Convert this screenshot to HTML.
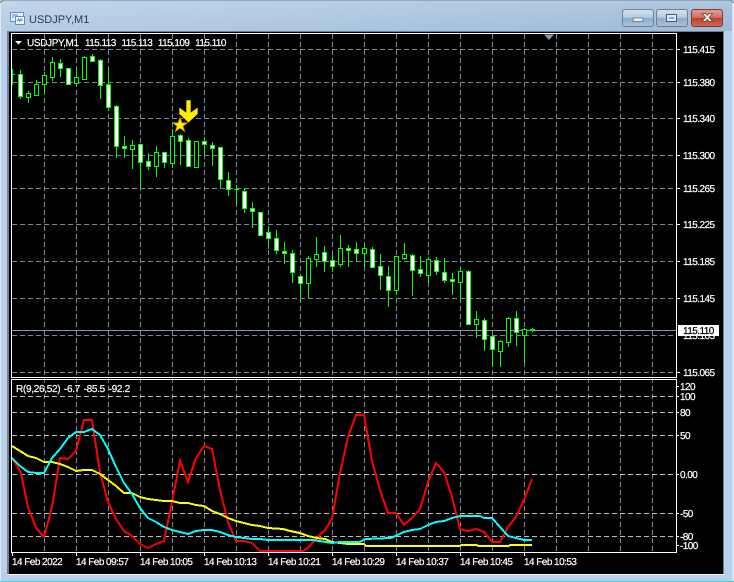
<!DOCTYPE html>
<html><head><meta charset="utf-8"><style>
html,body{margin:0;padding:0;width:734px;height:582px;overflow:hidden;background:#b8d1ea}
svg{position:absolute;left:0;top:0;display:block}
text{font-family:"Liberation Sans",sans-serif;font-size:10px;letter-spacing:-.55px;fill:#fff;stroke:#fff;stroke-width:.2px;text-rendering:geometricPrecision}
.w{word-spacing:3.4px}
.b{fill:none;stroke:#fff;stroke-width:1}
.g{fill:none;stroke:#778899;stroke-width:1;stroke-dasharray:5 3}
.s{fill:none;stroke:#b8bfc6;stroke-width:1;stroke-dasharray:5 3}
.l{fill:none;stroke-width:2;stroke-linejoin:miter}
</style></head><body>
<svg width="734" height="582" viewBox="0 0 734 582" xmlns="http://www.w3.org/2000/svg">
<defs>
<linearGradient id="tb" x1="0" y1="0" x2="1" y2="0"><stop offset="0" stop-color="#b5cde5"/><stop offset=".5" stop-color="#a9c4df"/><stop offset="1" stop-color="#9dbad7"/></linearGradient>
<linearGradient id="tv" x1="0" y1="0" x2="0" y2="1"><stop offset="0" stop-color="#fff" stop-opacity=".18"/><stop offset="1" stop-color="#fff" stop-opacity="0"/></linearGradient>
<linearGradient id="bb" x1="0" y1="0" x2="0" y2="1"><stop offset="0" stop-color="#d5e2ef"/><stop offset=".48" stop-color="#b5cbe0"/><stop offset=".5" stop-color="#8dacca"/><stop offset="1" stop-color="#a7c3de"/></linearGradient>
<linearGradient id="cb" x1="0" y1="0" x2="0" y2="1"><stop offset="0" stop-color="#e0a094"/><stop offset=".48" stop-color="#cf6f60"/><stop offset=".5" stop-color="#bb3f2e"/><stop offset="1" stop-color="#cf6a55"/></linearGradient>
<clipPath id="cm"><rect x="12" y="34" width="664" height="343"/></clipPath>
</defs>
<!-- window frame -->
<rect x="0" y="0" width="734" height="582" fill="#b8d1ea"/>
<rect x="0" y="0" width="734" height="31" fill="url(#tb)"/>
<rect x="0" y="0" width="734" height="31" fill="url(#tv)"/>
<path d="M0 3L3 0H730L734 3" fill="none" stroke="#6f8196" stroke-width="1"/>
<rect x="0" y="581" width="734" height="1" fill="#2fd3e8"/>
<rect x="732" y="3" width="2" height="578" fill="#d8e6f3"/>
<rect x="0" y="3" width="1" height="578" fill="#dfeaf5"/>
<!-- title icon -->
<rect x="10.500" y="12.500" width="13" height="9" fill="#eaf2fb" stroke="#5f8fc6"/>
<rect x="15.500" y="16.500" width="9" height="8" fill="#f4f8fd" stroke="#5f8fc6"/>
<path d="M12 15h6M12 17h2M17 21l1.500-2 1 2 1.500-2 1 2" fill="none" stroke="#4e80bb"/>
<text x="29" y="23" style="font-size:11px;letter-spacing:0;fill:#2c3a50;stroke:none">USDJPY,M1</text>
<!-- buttons -->
<rect x="622.500" y="9.500" width="31" height="17" rx="2.500" fill="url(#bb)" stroke="#6c8098"/>
<rect x="656.500" y="9.500" width="31" height="17" rx="2.500" fill="url(#bb)" stroke="#6c8098"/>
<rect x="691.500" y="9.500" width="31" height="17" rx="2.500" fill="url(#cb)" stroke="#7d3a33"/>
<rect x="633" y="18" width="10" height="3.500" fill="#eef2f6" stroke="#56677c" stroke-width=".7"/>
<rect x="666.500" y="14.500" width="10" height="7" fill="#dfe7ef" stroke="#4d5d72"/>
<rect x="669" y="17" width="5" height="2" fill="#8ea7c1"/>
<path d="M702 13.500h3.500l1.800 2 1.800-2h3.500l-3.500 4 3.500 4h-3.500l-1.800-2-1.800 2H702l3.500-4z" fill="#f4f1ef" stroke="#6f3a33" stroke-width=".7"/>
<!-- client -->
<rect x="7" y="31" width="717" height="544" fill="#6f7f8f"/>
<rect x="9" y="32" width="714" height="542" fill="#000"/>
<rect x="7" y="574" width="717" height="1" fill="#f4f7fa"/>
<!-- grid vertical -->
<path class="g" d="M44.500 34V552M76.500 34V552M108.500 34V552M140.500 34V552M172.500 34V552M204.500 34V552M236.500 34V552M268.500 34V552M300.500 34V552M332.500 34V552M364.500 34V552M396.500 34V552M428.500 34V552M460.500 34V552M492.500 34V552M524.500 34V552M556.500 34V552M588.500 34V552M620.500 34V552M652.500 34V552"/>
<!-- grid horizontal -->
<path class="g" d="M12 49.500H676M12 82.500H676M12 118.500H676M12 155.500H676M12 188.500H676M12 224.500H676M12 261.500H676M12 298.500H676M12 335.500H676M12 372.500H676"/>
<path class="s" d="M12 396.500H676M12 412.500H676M12 435.500H676M12 474.500H676M12 513.500H676M12 536.500H676"/>
<path d="M12 330.500H676" stroke="#8494a6" stroke-width="1"/>
<g clip-path="url(#cm)" shape-rendering="crispEdges">
<!-- wicks -->
<path fill="none" stroke="#00ff00" stroke-width="1" d="M12.500 69V85M12 74.500H15M20.500 70V99M28.500 91V103M36.500 80V95M44.500 72V92M52.500 57V81M60.500 59V77M76.500 70V85M84.500 56V80M92.500 54V62M100.500 59V99M108.500 68V111M116.500 105V158M124.500 136V158M132.500 140V169M140.500 144V188M148.500 153V170M156.500 146V177M164.500 152V168M172.500 129V168M180.500 134V165M188.500 138V167M196.500 141V168M204.500 137V155M212.500 142V166M220.500 147V188M228.500 172V196M236.500 185V204M234 189.500H239M244.500 188V213M252.500 202V228M268.500 226V249M276.500 230V254M284.500 242V264M292.500 250V283M300.500 274V301M308.500 256V299M316.500 237V267M324.500 246V272M332.500 255V272M340.500 235V267M348.500 245V267M356.500 242V262M364.500 245V267M372.500 247V268M380.500 254V290M388.500 266V307M396.500 256V295M404.500 243V260M412.500 254V296M420.500 256V277M428.500 257V283M436.500 257V275M444.500 258V283M452.500 273V295M460.500 268V300M468.500 270V325M476.500 311V338M484.500 318V351M492.500 336V367M500.500 340V367M508.500 317V347M516.500 311V346M524.500 328V363M532.500 328V332M530 329.500H535"/>
<!-- hollow bodies -->
<path fill="#000" stroke="#00ff00" stroke-width="1" d="M26.500 93.500h4v4h-4zM34.500 84.500h4v11h-4zM42.500 75.500h4v9h-4zM50.500 62.500h4v15h-4zM74.500 77.500h4v6h-4zM82.500 57.500h4v22h-4zM130.500 145.500h4v4h-4zM154.500 152.500h4v14h-4zM170.500 136.500h4v27h-4zM194.500 141.500h4v26h-4zM306.500 258.500h4v25h-4zM314.500 254.500h4v5h-4zM338.500 248.500h4v16h-4zM362.500 248.500h4v5h-4zM394.500 256.500h4v34h-4zM402.500 254.500h4v4h-4zM426.500 259.500h4v16h-4zM458.500 271.500h4v11h-4zM474.500 319.500h4v5h-4zM498.500 341.500h4v10h-4zM506.500 318.500h4v24h-4zM522.500 329.500h4v6h-4z"/>
<!-- white bodies -->
<path fill="#fff" stroke="#00ff00" stroke-width="1" d="M18.500 74.500h4v22h-4zM58.500 63.500h4v5h-4zM66.500 68.500h4v16h-4zM90.500 56.500h4v5h-4zM98.500 60.500h4v25h-4zM106.500 84.500h4v23h-4zM114.500 106.500h4v40h-4zM122.500 146.500h4v2h-4zM138.500 144.500h4v18h-4zM146.500 161.500h4v5h-4zM162.500 152.500h4v10h-4zM178.500 135.500h4v6h-4zM186.500 140.500h4v26h-4zM202.500 141.500h4v3h-4zM210.500 145.500h4v3h-4zM218.500 147.500h4v32h-4zM226.500 180.500h4v9h-4zM242.500 191.500h4v17h-4zM250.500 208.500h4v3h-4zM258.500 212.500h4v23h-4zM266.500 232.500h4v6h-4zM274.500 238.500h4v12h-4zM282.500 251.500h4v2h-4zM290.500 253.500h4v19h-4zM298.500 276.500h4v7h-4zM322.500 252.500h4v9h-4zM330.500 260.500h4v6h-4zM346.500 248.500h4v2h-4zM354.500 249.500h4v4h-4zM370.500 249.500h4v18h-4zM378.500 266.500h4v9h-4zM386.500 276.500h4v14h-4zM410.500 255.500h4v15h-4zM418.500 269.500h4v4h-4zM434.500 260.500h4v11h-4zM442.500 272.500h4v8h-4zM450.500 279.500h4v2h-4zM466.500 271.500h4v53h-4zM482.500 320.500h4v19h-4zM490.500 336.500h4v13h-4zM514.500 318.500h4v14h-4zM530.500 329.500h4v1h-4z"/>
</g>
<!-- arrow & star -->
<path d="M186 100H191V112L198 107V114L188.500 123L179 114V107L186 112Z" fill="#ffee00" stroke="#000" stroke-width=".6"/>
<path d="M180 117.500l1.900 5.300h5.500l-4.400 3.300 1.700 5.400-4.700-3.300-4.700 3.300 1.700-5.400-4.400-3.300h5.500z" fill="#ffee00" stroke="#b89000" stroke-width=".8"/>
<!-- shift triangle -->
<path d="M544 34.500h10l-5 5.500z" fill="#8a9aac"/>
<!-- indicator lines -->
<g shape-rendering="crispEdges">
<path class="l" stroke="#ff0000" d="M12 458L20.700 472L28 507L36 528L44 537L52 507L60 458L68 459L76 451L84 420L92 420L100 472L108 502L116 519L124 531L132 536L140 544L148 548L156 544L164 541L172 502L180 461L188 482L196 458L204 446L212 449L220 490L228 522L236 541L244 541L252 543L260 551L303 551L308 548L316.700 538L325 530L332 519L340 473L348 437L356 415L364 415L372 461L380 490L388 513L396 513L404 525L412 518L420 509L428 482L436 463L444 472L452 497L460 529L468 531L476 529L484 532L492 542L500 542L508 527L516 517L524 500L532 479"/>
<path class="l" stroke="#ffff00" d="M12 446L20 451L28 456L36 458L44 462L52 462L60 464L68 467L76 471L84 470L92 470L100 474L108 480L116 486L124 493L132 493L140 497L148 499L156 500L164 501L172 501L180 503L188 503L196 505L204 506L212 511L220 514L228 518L236 521L244 523L252 525L260 526L268 528L283 529L290 531L300 533L308 536L317 538L325 539L332 542L340 543L348 544L364 544L366 546L460 546L461 545L477 545L478 546L509 546L510 545L532 545"/>
<path class="l" stroke="#00ffff" d="M12 458L20 466L28 472L36 473L44 473L52 458L60 449L68 438L76 432L84 432L92 429L100 435L108 449L116 467L124 483L132 494L140 508L148 518L156 522L164 527L172 530L180 532L188 534L196 531L204 530L212 530L220 532L228 535L236 537L244 538L252 539L260 539L268 540L313 540L332 543L340 542L360 542L365 539L391 538L404 532L412 530L420 529L428 525L436 522L444 521L452 518L460 516L480 516L484 518L492 518L500 527L508 536L516 538L524 540L532 540"/>
</g>
<!-- borders -->
<path class="b" d="M11.500 33.500H676.500V377.500H11.500ZM11.500 379.500H676.500V552.500H11.500Z"/>
<path class="b" d="M677 49.500h3M677 82.500h3M677 118.500h3M677 155.500h3M677 188.500h3M677 224.500h3M677 261.500h3M677 298.500h3M677 372.500h3M677 386.500h2M677 396.500h2M677 412.500h2M677 435.500h2M677 474.500h2M677 513.500h2M677 536.500h2M677 545.500h2M12.500 553v3M76.500 553v3M140.500 553v3M204.500 553v3M268.500 553v3M332.500 553v3M396.500 553v3M460.500 553v3M524.500 553v3"/>
<!-- header -->
<path d="M15 41h7l-3.500 3.500z" fill="#fff"/>
<text x="27" y="46" style="letter-spacing:-.35px">USDJPY,M1</text>
<text x="85" y="46" class="w">115.113 115.113 115.109 115.110</text>
<text x="16" y="392" style="letter-spacing:-.3px;word-spacing:1.2px">R(9,26,52) -6.7 -85.5 -92.2</text>
<!-- price labels -->
<text x="683" y="53">115.415</text>
<text x="683" y="86">115.380</text>
<text x="683" y="122">115.340</text>
<text x="683" y="159">115.300</text>
<text x="683" y="192">115.265</text>
<text x="683" y="228">115.225</text>
<text x="683" y="265">115.185</text>
<text x="683" y="302">115.145</text>
<text x="683" y="339">115.105</text>
<text x="683" y="376">115.065</text>
<rect x="678" y="325" width="41" height="11" fill="#fff"/>
<text x="683" y="334" style="fill:#000;stroke:#000">115.110</text>
<!-- indicator labels -->
<text x="680" y="390">120</text>
<text x="680" y="400">100</text>
<text x="680" y="416">80</text>
<text x="680" y="439">50</text>
<text x="680" y="478">0.00</text>
<text x="680" y="517">-50</text>
<text x="680" y="540">-80</text>
<text x="680" y="549">-100</text>
<!-- time labels -->
<text x="12" y="565">14 Feb 2022</text>
<text x="76" y="565">14 Feb 09:57</text>
<text x="140" y="565">14 Feb 10:05</text>
<text x="204" y="565">14 Feb 10:13</text>
<text x="268" y="565">14 Feb 10:21</text>
<text x="332" y="565">14 Feb 10:29</text>
<text x="396" y="565">14 Feb 10:37</text>
<text x="460" y="565">14 Feb 10:45</text>
<text x="524" y="565">14 Feb 10:53</text>
</svg>
</body></html>
